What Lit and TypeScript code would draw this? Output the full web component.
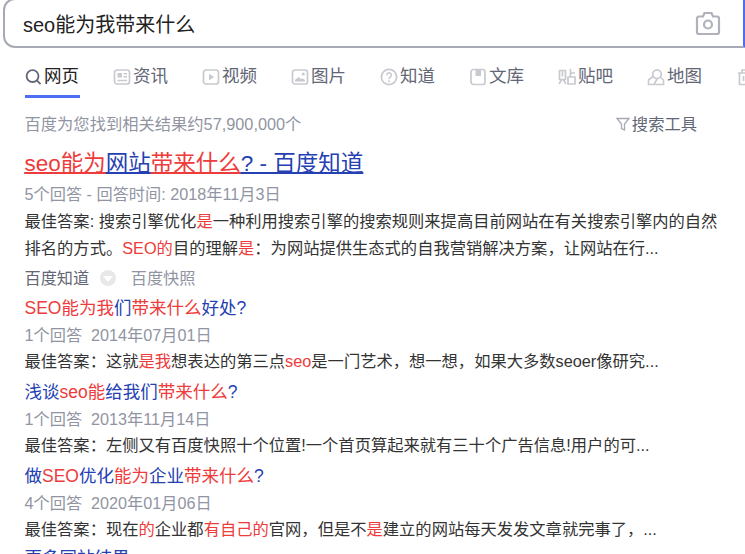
import { LitElement, html, css, svg } from "lit";
import { customElement } from "lit/decorators.js";

const parts = (s: string) =>
  s.split(/(\[[^\]]*\])/).map((p) => (p.startsWith("[") ? html`<em>${p.slice(1, -1)}</em>` : p));

const G = "#c9cad0";
const icon = (body: unknown) =>
  html`<svg class="ico" viewBox="0 0 18 18" fill="none" stroke="${G}" stroke-width="1.7">${body}</svg>`;

const tabs = [
  { t: "资讯", i: svg`<rect x="1.5" y="2" width="15" height="14" rx="2.5"/><rect x="4.5" y="5" width="4.5" height="4.5" fill="${G}" stroke="none"/><path d="M10.5 5.7h3.5M10.5 8.8h3.5M4.5 12.5h9.5" stroke-width="1.4"/>` },
  { t: "视频", i: svg`<rect x="1.5" y="2" width="15" height="14" rx="2.5"/><path d="M7 5.8l5.2 3.2L7 12.2z" fill="${G}" stroke="none"/>` },
  { t: "图片", i: svg`<rect x="1.5" y="2" width="15" height="14" rx="2.5"/><circle cx="12.3" cy="6" r="1.5" fill="${G}" stroke="none"/><path d="M4 13.5v-1.5l3.5-3 2.5 2 2-.5 2 1.5v1.5z" fill="${G}" stroke="none"/>` },
  { t: "知道", i: svg`<circle cx="9" cy="9" r="7.6"/><path d="M6.7 7.2a2.3 2.3 0 1 1 3.6 1.9c-.9.6-1.3 1-1.3 2" stroke-width="1.5"/><circle cx="9" cy="13.3" r="1" fill="${G}" stroke="none"/>` },
  { t: "文库", i: svg`<rect x="2" y="1.5" width="14" height="15" rx="2.5"/><path d="M6.5 1.5h5.5v6.5h-5.5z" fill="${G}" stroke="none"/>` },
  { t: "贴吧", i: svg`<path d="M1.5 2.5h6v9h-6zM4.5 2.5v6M1 16l2.5-4M8 16l-2.5-4M12.5 1v8M12.5 5H17M10 9h7v7h-7z" stroke-width="1.7"/>` },
  { t: "地图", i: svg`<circle cx="10" cy="6.2" r="4.3"/><path d="M6 8.5 1.5 12v4.5h15V12l-3.500-3M10 11l-3 5.500" stroke-width="1.6"/>` },
];

const subs = [
  { t: "[SEO能为我]们[带来什么]好处?", m: "1个回答  2014年07月01日", b: "最佳答案：这就[是我]想表达的第三点[seo]是一门艺术，想一想，如果大多数seoer像研究..." },
  { t: "浅谈[seo能]给我们[带来什么]?", m: "1个回答  2013年11月14日", b: "最佳答案：左侧又有百度快照十个位置!一个首页算起来就有三十个广告信息!用户的可..." },
  { t: "做[SEO]优化[能为]企业[带来什么]?", m: "4个回答  2020年01月06日", b: "最佳答案：现在[的]企业都[有自己的]官网，但是不[是]建立的网站每天发发文章就完事了，..." },
];

@customElement("app-root")
export class AppRoot extends LitElement {
  static styles = css`
    :host {
      display: block;
      width: 745px;
      height: 554px;
      overflow: hidden;
      background: #fff;
      font-family: "Liberation Sans", Arial, "Noto Sans CJK SC", sans-serif;
      color: #333;
    }
    em { font-style: normal; color: #ee3b3b; }
    .search {
      box-sizing: border-box;
      width: 742px;
      height: 50px;
      margin: -2px 0 0 3px;
      border: 2px solid #a7aab5;
      border-right-color: #4e6ef2;
      border-radius: 12px 0 0 12px;
      display: flex;
      align-items: center;
      justify-content: space-between;
      padding: 0 21px 0 18px;
      font-size: 20px;
      color: #222;
    }
    .cam { width: 28px; height: 26px; display: block; }
    .tabs {
      display: flex;
      height: 37px;
      margin-top: 13px;
      padding-left: 25px;
      white-space: nowrap;
      font-size: 17.5px;
      color: #626675;
    }
    .tab { display: flex; flex: none; width: 89px; align-items: flex-start; gap: 2px; box-sizing: border-box; padding-top: 3px; line-height: 25px; height: 37px; }
    .tab.on { width: 55px; margin-right: 34px; color: #222; border-bottom: 3px solid #4e6ef2; }
    .ico { width: 18px; height: 18px; margin: 3.5px 0 0 -1px; flex: none; }
    .tab.on .ico { margin-left: 0; width: 17px; }
    .tool { display: flex; justify-content: space-between; margin-top: 16px; padding: 0 48px 0 24.5px; font-size: 16.3px; line-height: 20px; color: #9195a3; white-space: nowrap; }
    .tl { display: flex; align-items: center; gap: 2px; color: #626675; }
    .tl svg { width: 14px; height: 14px; }
    .main { padding-left: 24.5px; }
    .h { font-size: 22.5px; line-height: 30px; margin-top: 15px; color: #2440b3; text-decoration: underline; text-decoration-thickness: 2px; white-space: nowrap; }
    .h em { text-decoration: underline; text-decoration-thickness: 2px; }
    .meta { color: #9195a3; font-size: 16.2px; line-height: 22px; white-space: pre; }
    .m1 { margin-top: 4px; }
    .body { color: #333; font-size: 16.3px; line-height: 27px; white-space: nowrap; }
    .b1 { margin-top: 3px; }
    .src { display: flex; align-items: center; margin-top: 5px; font-size: 16.2px; line-height: 22px; color: #626675; }
    .dot { width: 16px; height: 16px; margin: 0 15px 0 10.500px; background: #e8e8ea; border-radius: 50%; display: flex; align-items: center; justify-content: center; }
    .dot i { border: 5px solid transparent; border-top: 6px solid #fff; border-bottom: 0; margin-top: 2px; }
    .snap { color: #9195a3; }
    .sub { margin-top: 8px; }
    .sub.first { margin-top: 7px; }
    .sh { font-size: 17.5px; line-height: 24px; color: #2440b3; white-space: nowrap; }
    .sub .meta { margin-top: 4px; }
    .sub .body { line-height: 22px; margin-top: 4px; }
    .more { font-size: 17.5px; line-height: 24px; color: #2440b3; margin-top: 6px; }
  `;

  render() {
    return html`
      <div class="search">
        <span>seo能为我带来什么</span>
        <svg class="cam" viewBox="0 0 28 26" fill="none" stroke="#b0b2bb" stroke-width="2.2">
          <path d="M3 8.500A2 2 0 0 1 5 6.500h4L10.500 3h7L19 6.500h4a2 2 0 0 1 2 2V22a2 2 0 0 1-2 2H5a2 2 0 0 1-2-2z" />
          <circle cx="14" cy="14.500" r="4" />
        </svg>
      </div>
      <div class="tabs">
        <div class="tab on">
          <svg class="ico" viewBox="0 0 18 18" fill="none" stroke="#626675" stroke-width="1.9">
            <circle cx="8" cy="8" r="6.300"/><path d="M12.500 12.500 16.500 16.500"/>
          </svg>网页
        </div>
        ${tabs.map((t) => html`<div class="tab">${icon(t.i)}${t.t}</div>`)}
        <div class="tab">${icon(svg`<path d="M2 5h14M6 5V2h6v3M3.500 5v11.500h11V5M7.500 8v5M10.500 8v5"/>`)}</div>
      </div>
      <div class="tool">
        <span>百度为您找到相关结果约57,900,000个</span>
        <span class="tl">
          <svg viewBox="0 0 14 14" fill="none" stroke="#a7aab5" stroke-width="1.300"><path d="M1 1.500h12L8.500 7V13l-3-1.500V7z"/></svg>搜索工具
        </span>
      </div>
      <div class="main">
        <div class="h">${parts("[seo能为]网站[带来什么]? - 百度知道")}</div>
        <div class="meta m1">5个回答 - 回答时间: 2018年11月3日</div>
        <div class="body b1">${parts("最佳答案: 搜索引擎优化[是]一种利用搜索引擎的搜索规则来提高目前网站在有关搜索引擎内的自然")}</div>
        <div class="body">${parts("排名的方式。[SEO的]目的理解[是]：为网站提供生态式的自我营销解决方案，让网站在行...")}</div>
        <div class="src"><span>百度知道</span><span class="dot"><i></i></span><span class="snap">百度快照</span></div>
        ${subs.map(
          (s, i) => html`<div class="sub ${i === 0 ? "first" : ""}">
            <div class="sh">${parts(s.t)}</div>
            <div class="meta">${s.m}</div>
            <div class="body">${parts(s.b)}</div>
          </div>`
        )}
        <div class="more">更多同站结果</div>
      </div>
    `;
  }
}
